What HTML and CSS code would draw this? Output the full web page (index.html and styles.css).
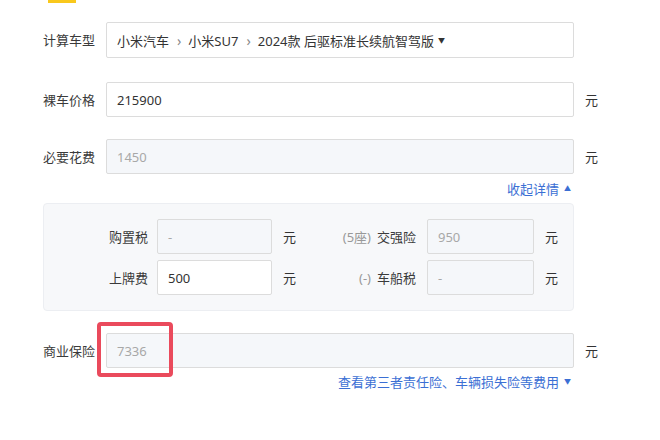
FILE: index.html
```html
<!DOCTYPE html>
<html lang="zh-CN">
<head>
<meta charset="utf-8">
<title>购车计算</title>
<link rel="stylesheet" href="styles.css">
</head>
<body>
<div class="page">
  <div class="tab-bar"></div>

  <div class="row row-first">
    <span class="label">计算车型</span>
    <div class="field field-tall">
      <span>小米汽车</span><span class="sep">›</span><span>小米SU7</span><span class="sep">›</span><span>2024款 后驱标准长续航智驾版</span><span class="caret">▼</span>
    </div>
  </div>

  <div class="row row-price">
    <span class="label">裸车价格</span>
    <div class="field">215900</div>
    <span class="unit">元</span>
  </div>

  <div class="row row-need">
    <span class="label">必要花费</span>
    <div class="field field-disabled">1450</div>
    <span class="unit">元</span>
  </div>

  <div class="toggle"><span class="link">收起详情</span><span class="tri">▲</span></div>

  <div class="detail">
    <div class="detail-row">
      <span class="d-label">购置税</span>
      <div class="field field-disabled field-small">-</div>
      <span class="d-unit">元</span>
      <span class="d-label d-label2"><span class="muted">(5座)</span>交强险</span>
      <div class="field field-disabled field-small">950</div>
      <span class="d-unit">元</span>
    </div>
    <div class="detail-row">
      <span class="d-label">上牌费</span>
      <div class="field field-small field-value">500</div>
      <span class="d-unit">元</span>
      <span class="d-label d-label2"><span class="muted">(-)</span>车船税</span>
      <div class="field field-disabled field-small">-</div>
      <span class="d-unit">元</span>
    </div>
  </div>

  <div class="row row-biz">
    <span class="label">商业保险</span>
    <div class="field field-disabled field-hl">7336<span class="highlight"></span></div>
    <span class="unit">元</span>
  </div>

  <div class="toggle toggle-biz"><span class="link">查看第三者责任险、车辆损失险等费用</span><span class="tri">▼</span></div>
</div>
</body>
</html>
```

FILE: styles.css
```css
* { box-sizing: border-box; }

html, body {
  margin: 0;
  padding: 0;
  background: #ffffff;
}

body {
  font-family: "Noto Sans", "Noto Sans CJK SC", sans-serif;
  font-size: 13px;
  color: #333333;
}

.page {
  padding-left: 43px;
  width: 620px;
}

.tab-bar {
  width: 28px;
  height: 3px;
  margin-left: 5px;
  background: #f9c81c;
}

.row {
  display: flex;
  align-items: center;
  gap: 11px;
}

.row-first { margin-top: 19px; }
.row-price { margin-top: 24px; }
.row-need { margin-top: 22px; }
.row-biz { margin-top: 22px; }

.label {
  width: 52px;
  flex: none;
  color: #3a3a3a;
  line-height: 18px;
  white-space: nowrap;
}

.field {
  position: relative;
  width: 468px;
  height: 35px;
  flex: none;
  display: flex;
  align-items: center;
  padding-left: 10px;
  border: 1px solid #dcdcdc;
  border-radius: 2px;
  background: #ffffff;
  color: #333333;
  white-space: nowrap;
}

.field-tall { height: 36px; }

.field-disabled {
  background: #f5f7fa;
  color: #a8a8a8;
}

.sep {
  color: #888888;
  margin: 0 7px 0 8px;
  font-size: 14px;
}

.caret {
  font-size: 7px;
  margin-left: 4px;
  color: #333333;
}

.unit {
  color: #333333;
  line-height: 18px;
}

.toggle {
  margin-top: 6px;
  width: 531px;
  display: flex;
  justify-content: flex-end;
  align-items: center;
  line-height: 18px;
  color: #3b6fd4;
  padding-right: 3px;
}

.toggle-biz { margin-top: 5px; }

.tri {
  font-size: 7px;
  margin-left: 5px;
}

.detail {
  margin-top: 5px;
  width: 531px;
  background: #f7f8fa;
  border: 1px solid #eceef2;
  border-radius: 4px;
  padding: 15px 0;
  display: flex;
  flex-direction: column;
  gap: 6px;
}

.detail-row {
  display: grid;
  grid-template-columns: 113px 115px 24px 131px 107px 24px;
  align-items: center;
}

.d-label {
  text-align: right;
  padding-right: 9px;
  white-space: nowrap;
  color: #3a3a3a;
}

.d-label2 { padding-right: 11px; }

.muted {
  color: #999999;
  margin-right: 6px;
}

.field-small {
  width: auto;
  height: 35px;
}

.d-unit {
  padding-left: 11px;
  color: #333333;
}

.highlight {
  position: absolute;
  left: -10px;
  top: -12px;
  width: 76px;
  height: 55px;
  border: 4px solid #ea4a5c;
  border-radius: 4px;
}
```
